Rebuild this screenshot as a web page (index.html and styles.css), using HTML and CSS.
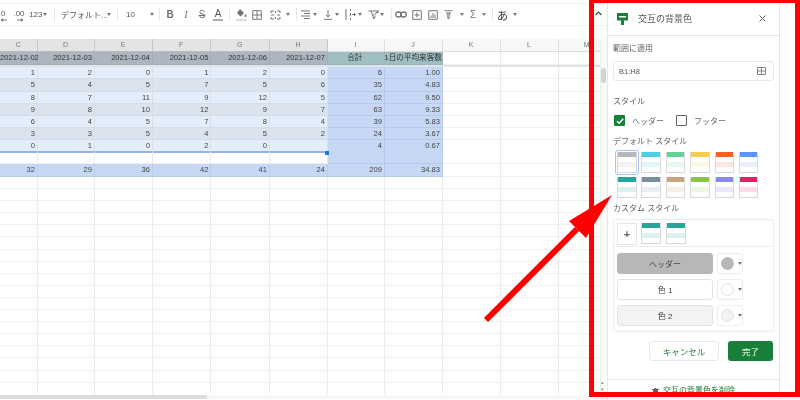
FILE: index.html
```html
<!DOCTYPE html>
<html lang="ja">
<head>
<meta charset="utf-8">
<title>交互の背景色</title>
<link rel="stylesheet" href="styles.css">
</head>
<body>
<div class="app">
  <main class="sheet">
    <div class="toolbar">
      <span class="tx dec">.0<svg width="7" height="4" viewBox="0 0 7 4"><path d="M7 2H1M3 .5 1 2l2 1.500" class="ln"/></svg></span>
      <span class="tx dec">.00<svg width="7" height="4" viewBox="0 0 7 4"><path d="M0 2h6M4 .5 6 2 4 3.500" class="ln"/></svg></span>
      <span class="tx">123<i class="ar"></i></span>
      <span class="sep"></span>
      <span class="tx">デフォルト...</span>
      <i class="ar"></i>
      <span class="sep"></span>
      <span class="tx">10</span>
      <i class="ar"></i>
      <span class="sep"></span>
      <span class="tx bold">B</span>
      <span class="tx ital">I</span>
      <span class="tx strike">S</span>
      <span class="tx under">A</span>
      <span class="sep"></span>
      <svg width="11" height="13" viewBox="0 0 11 13"><path d="M4 1 8 5 4.500 8.500 1 5Z" fill="#6f7378"/><path d="M9.500 6c.8 1.200 1 1.600 1 2a1 1 0 0 1-2 0c0-.4.2-.8 1-2Z" fill="#6f7378"/><rect y="11" width="11" height="2" fill="#dedede"/></svg>
      <svg width="10" height="10" viewBox="0 0 10 10"><path d="M.7.700h8.600v8.600H.7ZM5 .7v8.600M.7 5h8.600" class="ln2"/></svg>
      <svg width="11" height="10" viewBox="0 0 11 10"><path d="M1 3V1h3M7 1h3v2M1 7v2h3M7 9h3V7M1 5h3M7 5h3M5.500 1v2M5.500 7v2" class="ln2"/></svg>
      <i class="ar"></i>
      <span class="sep"></span>
      <svg width="10" height="9" viewBox="0 0 10 9"><path d="M0 1h9M3 3.500h6M0 6h9M3 8.500h6" class="ln2"/></svg>
      <i class="ar"></i>
      <svg width="10" height="10" viewBox="0 0 10 10"><path d="M5 0v7M3 5l2 2 2-2M1 9.300h8" class="ln2"/></svg>
      <i class="ar"></i>
      <svg width="11" height="11" viewBox="0 0 11 11"><path d="M1 0v11M5.500 0v2M5.500 4v3M5.500 9v2M7 5.500h3M9 4l1.500 1.500L9 7" class="ln2"/></svg>
      <i class="ar"></i>
      <svg width="11" height="10" viewBox="0 0 11 10"><path d="M.5 1h10L5 5.500M3 1l3 8 1.500-3.500M8 3l3-1" class="ln2"/></svg>
      <i class="ar"></i>
      <span class="sep"></span>
      <svg width="12" height="7" viewBox="0 0 12 7"><rect x=".7" y="1" width="5.500" height="5" rx="2.500" class="ln3"/><rect x="5.800" y="1" width="5.500" height="5" rx="2.500" class="ln3"/></svg>
      <svg width="10" height="10" viewBox="0 0 10 10"><path d="M.7.700h8.600v8.600H.7ZM5 2.500v5M2.500 5h5" class="ln2"/></svg>
      <svg width="10" height="10" viewBox="0 0 10 10"><path d="M.7.700h8.600v8.600H.7ZM3 8V5.500M5 8V3M7 8V4.500" class="ln2"/></svg>
      <svg width="9" height="9" viewBox="0 0 9 9"><path d="M.5.700h8M2 3h5M3.800 3v5.500h1.400V3" class="ln2"/></svg>
      <i class="ar"></i>
      <span class="tx sig">Σ</span>
      <i class="ar"></i>
      <span class="sep"></span>
      <span class="tx ime">あ</span>
      <i class="ar"></i>
    </div>
    <div class="formula"></div>
    <div class="body">
      <div class="grid">
        <div class="row colhead">
          <span>C</span><span>D</span><span>E</span><span>F</span><span>G</span><span>H</span><span class="off">I</span><span class="off">J</span><span class="off">K</span><span class="off">L</span><span class="off">M</span>
        </div>
        <div class="row head">
          <span>2021-12-02</span><span>2021-12-03</span><span>2021-12-04</span><span>2021-12-05</span><span>2021-12-06</span><span>2021-12-07</span><span class="teal ctr">合計</span><span class="teal">1日の平均来客数</span><span class="no"></span><span class="no"></span><span class="no"></span>
        </div>
        <div class="freeze"></div>
        <div class="row a"><span>1</span><span>2</span><span>0</span><span>1</span><span>2</span><span>0</span><span class="sel">6</span><span class="sel">1.00</span><span class="no"></span><span class="no"></span><span class="no"></span></div>
        <div class="row b tall"><span>5</span><span>4</span><span>5</span><span>7</span><span>5</span><span>6</span><span class="sel">35</span><span class="sel">4.83</span><span class="no"></span><span class="no"></span><span class="no"></span></div>
        <div class="row a"><span>8</span><span>7</span><span>11</span><span>9</span><span>12</span><span>5</span><span class="sel">62</span><span class="sel">9.50</span><span class="no"></span><span class="no"></span><span class="no"></span></div>
        <div class="row b"><span>9</span><span>8</span><span>10</span><span>12</span><span>9</span><span>7</span><span class="sel">63</span><span class="sel">9.33</span><span class="no"></span><span class="no"></span><span class="no"></span></div>
        <div class="row a"><span>6</span><span>4</span><span>5</span><span>7</span><span>8</span><span>4</span><span class="sel">39</span><span class="sel">5.83</span><span class="no"></span><span class="no"></span><span class="no"></span></div>
        <div class="row b"><span>3</span><span>3</span><span>5</span><span>4</span><span>5</span><span>2</span><span class="sel">24</span><span class="sel">3.67</span><span class="no"></span><span class="no"></span><span class="no"></span></div>
        <div class="row a last"><span>0</span><span>1</span><span>0</span><span>2</span><span>0</span><span></span><span class="sel">4</span><span class="sel">0.67</span><span class="no"></span><span class="no"></span><span class="no"></span></div>
        <div class="row"><span></span><span></span><span></span><span></span><span></span><span></span><span class="sel"></span><span class="sel"></span><span class="no"></span><span class="no"></span><span class="no"></span></div>
        <div class="row total tall"><span>32</span><span>29</span><span>36</span><span>42</span><span>41</span><span>24</span><span class="sel">209</span><span class="sel">34.83</span><span class="no"></span><span class="no"></span><span class="no"></span></div>
        <div class="row empties"><i></i><i></i><i></i><i></i><i></i><i></i><i></i><i></i><i></i><i></i><i></i></div>
        <div class="handle"></div>
      </div>
      <div class="vscroll"><div class="thumb"></div><div class="stepper">▴<br>▾</div></div>
    </div>
    <div class="hscroll"><div class="hthumb"></div></div>
  </main>

  <aside class="panel">
    <header class="phead">
      <svg width="11" height="12" viewBox="0 0 11 12"><path d="M0 0h11v7.500H7V12H4V7.500H0Z" fill="#188038"/><path d="M2 3h7v1.500H2Z" fill="#fff"/></svg>
      <h1>交互の背景色</h1>
      <svg class="close" width="7" height="7" viewBox="0 0 7 7"><path d="M.5.500l6 6M6.500.500l-6 6" stroke="#5f6368" fill="none"/></svg>
    </header>
    <div class="pbody">
      <div class="lbl first">範囲に適用</div>
      <div class="input">B1:H8
        <svg width="9" height="8" viewBox="0 0 9 8"><path d="M.5.500h8v7h-8ZM4.500.5v7M.5 4h8" stroke="#80868b" fill="none"/></svg>
      </div>
      <div class="lbl styl">スタイル</div>
      <div class="checks">
        <span class="box on"><svg width="10" height="10" viewBox="0 0 10 10"><path d="M2 5.200 4.200 7.300 8.200 2.800" stroke="#fff" stroke-width="1.400" fill="none"/></svg></span><span class="cl">ヘッダー</span>
        <span class="box"></span><span class="cl">フッター</span>
      </div>
      <div class="lbl def">デフォルト スタイル</div>
      <div class="swatches">
        <i class="sw s1 picked"></i><i class="sw s2"></i><i class="sw s3"></i><i class="sw s4"></i><i class="sw s5"></i><i class="sw s6"></i>
        <i class="sw s7"></i><i class="sw s8"></i><i class="sw s9"></i><i class="sw s10"></i><i class="sw s11"></i><i class="sw s12"></i>
      </div>
      <div class="lbl cus">カスタム スタイル</div>
      <div class="custom">
        <div class="crow"><span class="plus">+</span><i class="sw s7"></i><i class="sw s7"></i></div>
        <div class="cedit">
          <div class="eline"><span class="ebtn gray">ヘッダー</span><span class="chip"><i class="dot dg"></i><i class="ar"></i></span></div>
          <div class="eline"><span class="ebtn">色 1</span><span class="chip"><i class="dot"></i><i class="ar"></i></span></div>
          <div class="eline"><span class="ebtn light">色 2</span><span class="chip"><i class="dot dl"></i><i class="ar"></i></span></div>
        </div>
      </div>
      <div class="actions"><span class="cancel">キャンセル</span><span class="done">完了</span></div>
    </div>
    <footer class="pfoot">
      <svg width="7" height="8" viewBox="0 0 7 8"><path d="M1 2h5v6H1ZM0 1h7v1H0ZM2.500 0h2v1h-2Z" fill="#5f6368"/></svg>
      <span>交互の背景色を削除</span>
    </footer>
  </aside>
  <div class="side"></div>

  <svg class="chev" width="7" height="5" viewBox="0 0 7 5"><path d="M.5 4 3.500 1l3 3" stroke="#444" fill="none" stroke-width="1.200"/></svg>
  <div class="frame"></div>
  <svg class="arrow" width="800" height="400" viewBox="0 0 800 400"><path d="M486 320 577 229" stroke="#ff0000" stroke-width="6" fill="none"/><path d="M612 195 569 221 586 238Z" fill="#ff0000"/></svg>
</div>
</body>
</html>
```
FILE: styles.css
```css
* { box-sizing: border-box; }
html, body { margin: 0; padding: 0; background: #fff; }
body { font-family: "Liberation Sans", "Noto Sans CJK JP", sans-serif; color: #444; }
.app { position: relative; width: 800px; height: 400px; overflow: hidden; display: flex; }

/* sheet */
.sheet { width: 607px; height: 400px; display: flex; flex-direction: column; flex: none; filter: blur(.3px); }
.toolbar {
  height: 23px; margin-top: 3px; flex: none;
  border-top: 1px solid #f3f3f3; border-bottom: 1px solid #f1f1f1;
  display: grid; align-items: center; justify-items: start; margin-left: -5px;
  grid-template-columns: 17px 17px 25px 7px 45px 11px 9px 23px 10px 6px 16px 16px 16px 16px 7px 16px 18px 15px 11px 5px 11px 11px 11px 11px 12px 11px 11px 12px 4px 17px 16px 16px 15px 11px 11px 11px 5px 15px 20px;
}
.tx { font-size: 8px; color: #555; white-space: nowrap; display: inline-flex; align-items: center; }
.dec { position: relative; font-size: 8px; width: 14px; justify-content: center; padding-bottom: 2px; }
.dec svg { position: absolute; left: 5px; top: 9px; }
.ln { stroke: #555; fill: none; stroke-width: .8; }
.ln2 { stroke: #73777c; fill: none; stroke-width: 1; }
.ln3 { stroke: #6f7378; fill: none; stroke-width: 1.300; }
.ar { display: inline-block; width: 0; height: 0; border: 2.500px solid transparent; border-top: 3px solid #777; border-bottom: 0; margin-left: 1px; }
.sep { width: 1px; height: 13px; background: #e6e6e6; }
.bold, .ital, .strike, .under { width: 10px; justify-content: center; font-size: 10px; color: #6f7378; }
.bold { font-weight: bold; }
.ital { font-style: italic; font-family: "Liberation Serif", serif; }
.strike { text-decoration: line-through; }
.under { color: #555; border-bottom: 2px solid #aaa; height: 13px; }
.sig { font-size: 10px; color: #6f7378; }
.ime { font-size: 11px; color: #333; }
.formula { height: 13px; flex: none; }

.body { height: 355px; flex: none; display: flex; }
.grid { width: 600px; overflow: hidden; position: relative; display: flex; flex-direction: column; }
.row {
  display: grid; flex: none; height: 12px;
  grid-template-columns: 37.500px 57px 58px 58.500px 58.500px 58px 57px 58px 58px 58px 57.500px;
  font-size: 7.600px; line-height: 11px;
}
.row > span { border-right: 1px solid #d9dfe8; border-bottom: 1px solid #d6dde8; text-align: right; padding-right: 1.500px; white-space: nowrap; }
.row > .no { border-right-color: #e9e9e9; border-bottom-color: #f0f0f0; background: #fff; }
.tall { height: 13px; line-height: 12px; }
.colhead { height: 13px; font-size: 7px; line-height: 11px; color: #777; }
.colhead > span { background: #e3e4e5; text-align: center; padding: 0; border-right-color: #c8c8c8; border-bottom-color: #bbb; }
.colhead > .off { background: #f7f7f7; border-right-color: #ddd; border-bottom-color: #ddd; }
.head { height: 13px; line-height: 12px; border-top: 0; }
.head > span { background: #adb5bf; color: #333; border-color: #a5adb8; }
.head > .teal { background: #9fbec2; border-color: #97b6ba; overflow: visible; }
.head > .ctr { text-align: center; }
.freeze { height: 2px; flex: none; background: #dfe3ea; }
.a > span { background: #e4eefb; }
.b > span { background: #dbe3ee; }
.row > .sel { background: #c6d8f5; border-right-color: #b6caed; border-bottom-color: #b9cbea; }
.total > span { background: #c7d8f4; border-color: #bccde9; }
.row:not(.a):not(.b):not(.total):not(.head):not(.colhead):not(.empties) > span:not(.sel) { border-bottom-color: #f0f0f0; border-right-color: #e9e9e9; }
.last > span:not(.sel):not(.no) { border-bottom: 2px solid #8fb3ea; }
.empties { flex: 1; height: auto; background: repeating-linear-gradient(#fff 0 11.100px, #f0f0f0 11.100px 12.100px); }
.empties > i { border-right: 1px solid #ebebeb; }
.handle { position: absolute; left: 325px; top: 112px; width: 4px; height: 4px; background: #1a73e8; }

.vscroll { width: 7px; position: relative; border-left: 1px solid #eee; background: #fbfbfb; }
.thumb { position: absolute; left: 0; right: 1px; top: 29px; height: 15px; border-radius: 3px; background: #d3d3d3; }
.stepper { position: absolute; left: 0; top: 340px; font-size: 5px; line-height: 7px; color: #888; }
.hscroll { height: 4px; flex: none; margin-top: 1px; background: #f7f7f7; }
.hthumb { width: 207px; height: 100%; background: #dadce0; }

/* panel */
.panel { width: 173px; height: 400px; flex: none; border: 1px solid #e7e7e7; border-width: 0 1px; display: flex; flex-direction: column; filter: blur(.3px); background: #fff; }
.phead { height: 36px; flex: none; border-bottom: 1px solid #e5e5e5; display: flex; align-items: center; padding: 2px 13px 0 9px; }
.phead h1 { margin: 0 0 0 10px; font-size: 9px; font-weight: normal; color: #555; flex: 1; line-height: 12px; }
.close { flex: none; }
.pbody { padding: 7px 5px 0; height: 343px; flex: none; }
.lbl { font-size: 8px; line-height: 12px; color: #5f6368; white-space: nowrap; }
.styl { margin-top: 15px; }
.def { margin-top: 10px; }
.cus { margin-top: 5px; }
.input { margin-top: 6px; height: 20px; border: 1px solid #e8e8e8; border-radius: 3px; display: flex; justify-content: space-between; align-items: center; padding: 0 7px 0 5px; font-size: 7.500px; color: #555; }
.checks { margin-top: 7px; height: 11px; display: flex; align-items: center; padding-left: 1px; }
.box { width: 11px; height: 11px; border: 1.500px solid #5f6368; border-radius: 1px; flex: none; }
.box.on { background: #188038; border: 0; }
.box svg { display: block; margin: .5px; }
.cl { font-size: 8px; color: #666; margin: 0 11px 0 7px; width: 33px; white-space: nowrap; }
.swatches { margin-top: 4px; padding-left: 4px; display: grid; grid-template-columns: repeat(6, 19.500px); column-gap: 4.900px; row-gap: 4px; }
.sw {
  display: block; height: 21px; width: 19.500px;
  border: 1px solid #d9d9d9; border-top: 0;
  background: linear-gradient(var(--h) 5px, #fff 5px 10px, var(--t) 10px 15px, #fff 15px);
}
.picked { outline: 1.500px solid #a8c4f3; outline-offset: 1px; border-radius: 1px; }
.s1 { --h: #b7b7b7; --t: #f3f3f3; }
.s2 { --h: #4dd0e1; --t: #e0f7fa; }
.s3 { --h: #63d297; --t: #e7f9ef; }
.s4 { --h: #f7cb4d; --t: #fef8e3; }
.s5 { --h: #f46524; --t: #ffe6dd; }
.s6 { --h: #5b95f9; --t: #e8f0fe; }
.s7 { --h: #26a69a; --t: #ddf2f0; }
.s8 { --h: #78909c; --t: #ebeff1; }
.s9 { --h: #c9a679; --t: #f7f0e6; }
.s10 { --h: #8bc34a; --t: #eef7e3; }
.s11 { --h: #8989eb; --t: #e8e7fc; }
.s12 { --h: #e91d63; --t: #fddce8; }
.custom { margin-top: 4px; height: 113px; border: 1px solid #eee; border-radius: 3px; padding: 3px 3px 0; }
.crow { height: 24px; margin: 0 -3px; padding: 0 3px 2px; border-bottom: 1px solid #eee; display: flex; gap: 5.500px; }
.crow .sw { height: 21px; }
.plus { width: 20px; height: 22px; border: 1px solid #e6e6e6; display: flex; align-items: center; justify-content: center; font-size: 11px; font-weight: bold; color: #5f6368; margin-right: -1.500px; }
.cedit { margin-top: 6px; display: flex; flex-direction: column; gap: 5px; }
.eline { display: flex; gap: 4px; height: 21px; }
.ebtn { width: 96px; border: 1px solid #e2e2e2; border-radius: 3px; display: flex; align-items: center; justify-content: center; font-size: 8px; color: #444; }
.gray { background: #b7b7b7; border-color: #b7b7b7; }
.light { background: #f3f3f3; }
.chip { width: 26px; border: 1px solid #eee; border-radius: 3px; display: flex; align-items: center; padding-left: 3px; gap: 3px; }
.dot { width: 13px; height: 13px; border-radius: 50%; border: 1px solid #e2e2e2; flex: none; }
.dg { background: #b7b7b7; border-color: #b7b7b7; }
.dl { background: #f3f3f3; }
.actions { margin-top: 9px; height: 20px; display: flex; justify-content: flex-end; gap: 9px; padding-right: 1px; font-size: 8.500px; }
.actions span { display: flex; align-items: center; justify-content: center; border-radius: 3px; }
.cancel { width: 70px; color: #188038; border: 1px solid #e8e8e8; }
.done { width: 45px; background: #188038; color: #fff; }
.pfoot { border-top: 1px solid #e7e7e7; height: 20px; flex: none; display: flex; justify-content: center; gap: 4px; padding-top: 5px; font-size: 8px; line-height: 12px; color: #188038; }
.pfoot svg { margin-top: 3px; }
.side { flex: 1; }

/* overlays */
.chev { position: absolute; left: 595px; top: 11px; }
.frame { position: absolute; left: 589px; top: 0; width: 211px; height: 397px; border: 5px solid #ff0000; border-top-width: 3px; }
.arrow { position: absolute; left: 0; top: 0; }
```
